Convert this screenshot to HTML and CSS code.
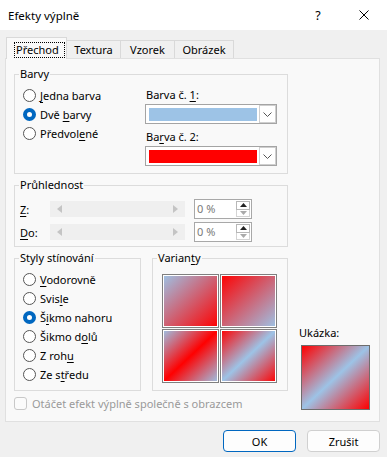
FILE: index.html
```html
<!DOCTYPE html>
<html lang="cs">
<head>
  <meta charset="UTF-8">
  <title>Efekty výplně</title>
  <link rel="stylesheet" href="styles.css">
</head>
<body>
  <div class="window">
    <div class="titlebar">
      <span class="title">Efekty výplně</span>
      <span class="caption-btn help">?</span>
      <span class="caption-btn close">
        <svg width="10" height="10" viewBox="0 0 10 10"><path d="M0.5 0.5 L9.5 9.5 M9.5 0.5 L0.5 9.5" stroke="#000" stroke-width="1" fill="none"/></svg>
      </span>
    </div>
    <div class="content">
      <div class="tabs">
        <div class="tab active"><span class="focus">Přechod</span></div>
        <div class="tab t-textura">Textura</div>
        <div class="tab t-vzorek">Vzorek</div>
        <div class="tab t-obrazek">Obrázek</div>
      </div>
      <div class="panel">
        <div class="main">
          <fieldset class="group barvy">
            <legend>Barvy</legend>
            <div class="barvy-body">
              <div class="options">
                <div class="opt"><span class="radio"></span><span><u>J</u>edna barva</span></div>
                <div class="opt"><span class="radio checked"></span><span>Dvě <u>b</u>arvy</span></div>
                <div class="opt"><span class="radio"></span><span>Předvol<u>e</u>né</span></div>
              </div>
              <div class="colors">
                <div class="color-label">Barva č. <u>1</u>:</div>
                <div class="combo">
                  <span class="swatch blue"></span>
                  <span class="drop"><svg width="9" height="5" viewBox="0 0 9 5"><path d="M0.5 0.5 L4.5 4.5 L8.5 0.5" stroke="#555" fill="none"/></svg></span>
                </div>
                <div class="color-label second">Ba<u>r</u>va č. 2:</div>
                <div class="combo">
                  <span class="swatch red"></span>
                  <span class="drop"><svg width="9" height="5" viewBox="0 0 9 5"><path d="M0.5 0.5 L4.5 4.5 L8.5 0.5" stroke="#555" fill="none"/></svg></span>
                </div>
              </div>
            </div>
          </fieldset>

          <fieldset class="group opacity">
            <legend>Průhlednost</legend>
            <div class="opacity-body">
              <div class="slider-row">
                <span class="slider-label"><u>Z</u>:</span>
                <div class="slider">
                  <svg width="5" height="8" viewBox="0 0 5 8"><polygon points="5,0 5,8 0,4" fill="#c4c4c4"/></svg>
                  <svg width="5" height="8" viewBox="0 0 5 8"><polygon points="0,0 0,8 5,4" fill="#c4c4c4"/></svg>
                </div>
                <div class="spin">
                  <span class="spin-value">0 %</span>
                  <span class="spin-btns">
                    <span class="spin-up"><svg width="7" height="4" viewBox="0 0 7 4"><polygon points="0,4 7,4 3.5,0" fill="#222"/></svg></span>
                    <span class="spin-down"><svg width="7" height="4" viewBox="0 0 7 4"><polygon points="0,0 7,0 3.5,4" fill="#aaa"/></svg></span>
                  </span>
                </div>
              </div>
              <div class="slider-row">
                <span class="slider-label"><u>D</u>o:</span>
                <div class="slider">
                  <svg width="5" height="8" viewBox="0 0 5 8"><polygon points="5,0 5,8 0,4" fill="#c4c4c4"/></svg>
                  <svg width="5" height="8" viewBox="0 0 5 8"><polygon points="0,0 0,8 5,4" fill="#c4c4c4"/></svg>
                </div>
                <div class="spin">
                  <span class="spin-value">0 %</span>
                  <span class="spin-btns">
                    <span class="spin-up"><svg width="7" height="4" viewBox="0 0 7 4"><polygon points="0,4 7,4 3.5,0" fill="#222"/></svg></span>
                    <span class="spin-down"><svg width="7" height="4" viewBox="0 0 7 4"><polygon points="0,0 7,0 3.5,4" fill="#aaa"/></svg></span>
                  </span>
                </div>
              </div>
            </div>
          </fieldset>

          <div class="row3">
            <fieldset class="group styles">
              <legend>Styly stínování</legend>
              <div class="styles-body">
                <div class="opt"><span class="radio"></span><span><u>V</u>odorovně</span></div>
                <div class="opt"><span class="radio"></span><span>Svis<u>l</u>e</span></div>
                <div class="opt"><span class="radio checked"></span><span>Š<u>i</u>kmo nahoru</span></div>
                <div class="opt"><span class="radio"></span><span>Šikmo d<u>o</u>lů</span></div>
                <div class="opt"><span class="radio"></span><span>Z roh<u>u</u></span></div>
                <div class="opt"><span class="radio"></span><span>Ze s<u>t</u>ředu</span></div>
              </div>
            </fieldset>
            <fieldset class="group variants">
              <legend>Varian<u>t</u>y</legend>
              <div class="tiles">
                <span class="tile v1"></span>
                <span class="tile v2"></span>
                <span class="tile v3"></span>
                <span class="tile v4"></span>
              </div>
            </fieldset>
          </div>

          <div class="check-row">
            <span class="checkbox"></span>
            <span class="check-label">Otáčet efekt výplně společně s obrazcem</span>
          </div>
        </div>

        <div class="sample">
          <div class="sample-label">Ukázka:</div>
          <div class="sample-box"></div>
        </div>
      </div>
    </div>
    <div class="buttons">
      <button class="btn default">OK</button>
      <button class="btn">Zrušit</button>
    </div>
  </div>
</body>
</html>
```

FILE: styles.css
```css
* {
  box-sizing: border-box;
}
body {
  margin: 0;
  font-family: "Segoe UI", "Noto Sans", sans-serif;
  font-size: 11px;
  color: #000;
}
u {
  text-decoration-thickness: 1px;
  text-underline-offset: 2px;
}
.window {
  width: 387px;
  height: 457px;
  background: #f0f0f0;
  overflow: hidden;
}
.titlebar {
  height: 30px;
  background: #fff;
  display: flex;
  align-items: center;
  padding-left: 8px;
}
.title {
  flex: 1;
  font-size: 11.5px;
}
.caption-btn {
  width: 46px;
  height: 30px;
  display: flex;
  align-items: center;
  justify-content: center;
}
.help {
  font-size: 12.5px;
}
.content {
  padding: 7px 7px 0 5px;
}
.tabs {
  display: flex;
  align-items: flex-end;
  margin-left: 1px;
}
.tab {
  height: 18px;
  line-height: 17px;
  text-align: center;
  background: #f0f0f0;
  border: 1px solid #d9d9d9;
  border-bottom: none;
  margin-left: -1px;
}
.tab.active {
  width: 61px;
  height: 22px;
  margin-left: 0;
  position: relative;
  margin-bottom: -1px;
  background: #f9f9f9;
  padding: 3px 0 0 7px;
  text-align: left;
  z-index: 1;
}
.t-textura {
  width: 55px;
}
.t-vzorek {
  width: 55px;
}
.t-obrazek {
  width: 60px;
}
.focus {
  display: inline-block;
  border: 1px dotted #000;
  padding: 0 5px 0 1px;
  line-height: 14px;
}
.panel {
  height: 364px;
  background: #f9f9f9;
  border: 1px solid #e0e0e0;
  padding: 7px 0 0 8px;
  display: flex;
  align-items: flex-end;
}
.main {
  width: 274px;
  align-self: flex-start;
}
.group {
  margin: 0;
  padding: 0;
  border: 1px solid #dcdcdc;
  min-width: 0;
}
.group legend {
  padding: 0 1px;
  margin-left: 4px;
  line-height: 16px;
}
.barvy-body {
  display: flex;
  justify-content: space-between;
  padding: 4px 10px 7px 8px;
}
.opt {
  display: flex;
  align-items: center;
  gap: 4px;
  height: 19px;
}
.radio {
  width: 13px;
  height: 13px;
  border-radius: 50%;
  border: 1px solid #555;
  background: #fff;
  flex-shrink: 0;
}
.radio.checked {
  border: 4px solid #0067c0;
}
.colors {
  width: 132px;
}
.color-label {
  height: 18px;
  line-height: 18px;
  padding-left: 1px;
}
.color-label.second {
  margin-top: 4px;
}
.combo {
  height: 20px;
  border: 1px solid #a4a4a4;
  background: #fff;
  display: flex;
  align-items: stretch;
  padding: 2px 0 0 3px;
}
.swatch {
  width: 108px;
  height: 13px;
  margin-top: 1px;
}
.swatch.blue {
  background: #9dc3e6;
}
.swatch.red {
  background: #ff0000;
}
.drop {
  width: 17px;
  height: 18px;
  margin: -2px 0 0 auto;
  border: 1px solid #cfcfcf;
  background: #fff;
  display: flex;
  align-items: center;
  justify-content: center;
  padding-top: 1px;
}
.group.opacity {
  margin-top: 3px;
}
.opacity-body {
  padding: 6px 0 4px 5px;
  display: flex;
  flex-direction: column;
  gap: 3px;
}
.slider-row {
  display: flex;
  align-items: center;
  height: 20px;
}
.slider-label {
  width: 30px;
}
.slider {
  width: 135px;
  height: 16px;
  background: #efefef;
  display: flex;
  align-items: center;
  justify-content: space-between;
  padding: 0 7px 0 7px;
}
.spin {
  width: 58px;
  height: 20px;
  margin-left: 9px;
  border: 1px solid #a8a8a8;
  background: #fff;
  display: flex;
}
.spin-value {
  flex: 1;
  color: #7a7a7a;
  line-height: 17px;
  padding-left: 2px;
}
.spin-btns {
  width: 15px;
  display: flex;
  flex-direction: column;
  padding: 1px 1px 1px 0;
}
.spin-up,
.spin-down {
  flex: 1;
  display: flex;
  align-items: center;
  justify-content: center;
  border: 1px solid #d4d4d4;
}
.spin-up {
  border-color: #b8b8b8;
}
.spin-down {
  border-top: none;
}
.row3 {
  display: flex;
  gap: 11px;
  margin-top: 3px;
}
.group.styles {
  width: 127px;
}
.styles-body {
  padding: 4px 0 6px 8px;
}
.group.variants {
  width: 136px;
}
.tiles {
  display: grid;
  grid-template-columns: 57px 57px;
  grid-template-rows: 54px 54px;
  gap: 1px;
  padding: 8px 0 7px 9px;
}
.tile {
  border: 1px solid #7f7f7f;
  box-shadow: inset 0 0 0 1px #fff;
}
.v1 {
  background: linear-gradient(to bottom right, #9dc3e6, #ff0000);
}
.v2 {
  background: linear-gradient(to bottom right, #ff0000, #9dc3e6);
}
.v3 {
  background: linear-gradient(to bottom right, #9dc3e6, #ff0000 50%, #9dc3e6);
}
.v4 {
  background: linear-gradient(to bottom right, #ff0000, #9dc3e6 50%, #ff0000);
}
.check-row {
  margin-top: 6px;
  height: 13px;
  display: flex;
  align-items: center;
  gap: 5px;
}
.checkbox {
  width: 13px;
  height: 13px;
  border: 1px solid #c8c8c8;
  border-radius: 3px;
  background: #fbfbfb;
}
.check-label {
  color: #9a9a9a;
}
.sample {
  margin-left: 11px;
  margin-bottom: 11px;
}
.sample-label {
  line-height: 16px;
}
.sample-box {
  width: 69px;
  height: 65px;
  margin: 4px 0 0 2px;
  border: 1px solid #6d6d6d;
  background: linear-gradient(to bottom right, #ff0000, #9dc3e6 50%, #ff0000);
}
.buttons {
  display: flex;
  justify-content: flex-end;
  gap: 11px;
  padding: 8px 7px 0 0;
}
.btn {
  width: 73px;
  height: 22px;
  font: inherit;
  color: #000;
  background: #fdfdfd;
  border: 1px solid #d0d0d0;
  border-radius: 4px;
  padding: 0;
}
.btn.default {
  border-color: #0067c0;
}
```
